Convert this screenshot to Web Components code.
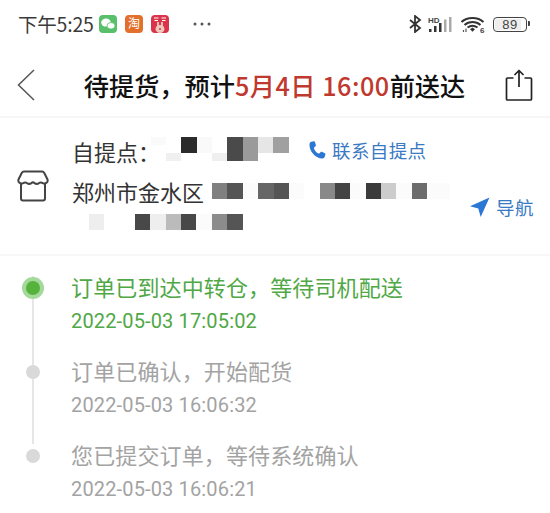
<!DOCTYPE html>
<html lang="zh">
<head>
<meta charset="utf-8">
<style>
  html, body { margin: 0; background: #fff; }
  body { width: 550px; height: 513px; overflow: hidden; font-family: "Noto Sans CJK SC", "Noto Sans", sans-serif; }
</style>
</head>
<body>
<status-bar></status-bar>
<order-header></order-header>
<pickup-card></pickup-card>
<order-timeline>
  <timeline-step active title="订单已到达中转仓，等待司机配送" time="2022-05-03 17:05:02"></timeline-step>
  <timeline-step title="订单已确认，开始配货" time="2022-05-03 16:06:32"></timeline-step>
  <timeline-step last title="您已提交订单，等待系统确认" time="2022-05-03 16:06:21"></timeline-step>
</order-timeline>

<script>
(function() {
  // 打码色块: [宽度, 颜色, 高度(可选), 顶部偏移(可选)]
  class MosaicRow extends HTMLElement {
    constructor() {
      super();
      this.attachShadow({ mode: 'open' });
    }
    connectedCallback() {
      const cells = JSON.parse(this.getAttribute('cells') || '[]');
      const h = this.getAttribute('h') || 16;
      this.shadowRoot.innerHTML = `
        <style>
          :host { display: inline-flex; height: ${h}px; vertical-align: top; }
          i { display: block; flex: none; }
        </style>
        ${cells.map(c => `<i style="width:${c[0]}px;height:${c[2] || h}px;margin-top:${c[3] || 0}px;background:${c[1]}"></i>`).join('')}
      `;
    }
  }

  class StatusBar extends HTMLElement {
    constructor() {
      super();
      this.attachShadow({ mode: 'open' });
      this.shadowRoot.innerHTML = `
        <style>
          :host { display: flex; align-items: center; height: 48px; box-sizing: border-box; padding: 0 0 0 18px; color: #3a3a3a; }
          .time { font: 400 19.500px/24px "Noto Sans CJK SC", sans-serif; width: 81px; white-space: nowrap; letter-spacing: -.2px; }
          .apps { display: flex; gap: 8px; align-items: center; }
          .apps svg { display: block; }
          .more { margin-left: 16px; }
          .right { margin-left: auto; margin-right: 23px; display: flex; align-items: center; }
          .batt { position: relative; width: 34px; height: 15px; box-sizing: border-box; border: 1.200px solid #444; border-radius: 4px; margin-left: 8px;
                  background: linear-gradient(90deg, #eee 85%, #fff 85%); background-clip: content-box; padding: 1px;
                  font: 400 13px/11px "Liberation Sans", sans-serif; text-align: center; color: #444; letter-spacing: .6px; }
          .batt::after { content: ""; position: absolute; right: -4px; top: 3.500px; width: 2px; height: 5px; background: #444; border-radius: 0 1px 1px 0; }
        </style>
        <span class="time">下午5:25</span>
        <div class="apps">
          <svg width="18" height="18" viewBox="0 0 18 18">
            <rect width="18" height="18" rx="4" fill="#58bf6b"/>
            <ellipse cx="7" cy="7.600" rx="4.800" ry="4" fill="#fff"/>
            <ellipse cx="12" cy="10.800" rx="4" ry="3.300" fill="#fff" stroke="#58bf6b" stroke-width=".8"/>
          </svg>
          <svg width="18" height="18" viewBox="0 0 18 18">
            <rect width="18" height="18" rx="4" fill="#e2702a"/>
            <text x="9" y="13" text-anchor="middle" font-family="Noto Sans CJK SC" font-size="12" fill="#fff">淘</text>
          </svg>
          <svg width="18" height="18" viewBox="0 0 18 18">
            <rect width="18" height="18" rx="4" fill="#d8344a"/>
            <path d="M3 3h4.500M3.500 5.500h3.500M10.500 3h4.500M11 5.500h3.500" stroke="#fff" stroke-width="1.100"/>
            <ellipse cx="9" cy="14" rx="4.500" ry="4" fill="#f0c8c0"/>
            <path d="M7 11V7M11 11V7" stroke="#f0c8c0" stroke-width="1.800"/>
            <circle cx="9" cy="14" r="1" fill="#c8404a"/>
          </svg>
          <svg class="more" width="18" height="4" viewBox="0 0 18 4" fill="#555">
            <circle cx="2" cy="2" r="1.500"/><circle cx="9" cy="2" r="1.500"/><circle cx="16" cy="2" r="1.500"/>
          </svg>
        </div>
        <div class="right">
          <svg width="13" height="18" viewBox="0 0 13 18" fill="none" stroke="#333" stroke-width="1.800">
            <path d="M1 5l10 8-5 4V1l5 4-10 8"/>
          </svg>
          <svg style="margin-left:6px" width="26" height="17" viewBox="0 0 26 17">
            <text x="0" y="7" font-family="Liberation Sans" font-size="8" font-weight="700" fill="#444">HD</text>
            <rect x="1" y="13" width="2.500" height="3" fill="#333"/>
            <rect x="6" y="10" width="2.500" height="6" fill="#333"/>
            <rect x="11" y="7" width="2.500" height="9" fill="#333"/>
            <rect x="16" y="3.500" width="2.500" height="12.500" fill="#aaa"/>
            <rect x="21" y="1" width="2.500" height="15" fill="#aaa"/>
          </svg>
          <svg style="margin-left:7px" width="24" height="18" viewBox="0 0 24 18">
            <path d="M.5 7C6 1.500 17 1.500 22.500 7M3.500 10C8 6 15 6 19.500 10M6.500 12.500C9.500 10.300 13.500 10.300 16.500 12.500" fill="none" stroke="#333" stroke-width="2"/>
            <path d="M9 14.300L11.500 12.500l2.500 1.800-2.500 2.500z" fill="#333"/>
            <path d="M2.500 17v-2M5 17v-3.500" stroke="#555" stroke-width="1.200"/>
            <text x="19" y="17.500" font-family="Liberation Sans" font-size="8" font-weight="700" fill="#444">6</text>
          </svg>
          <div class="batt">89</div>
        </div>
      `;
    }
  }

  class OrderHeader extends HTMLElement {
    constructor() {
      super();
      this.attachShadow({ mode: 'open' });
      this.shadowRoot.innerHTML = `
        <style>
          :host { display: flex; align-items: center; height: 70px; box-sizing: border-box; padding: 6px 17px 0 17px; border-bottom: 2px solid #f6f6f6; color: #111; }
          svg { display: block; flex: none; }
          h1 { flex: 1; margin: 0; text-align: center; font: 500 25.200px/30px "Noto Sans CJK SC", sans-serif; white-space: nowrap; padding-left: 9px; }
          em { font-style: normal; color: #c0392e; letter-spacing: .5px; }
        </style>
        <svg width="18" height="32" viewBox="0 0 18 32" fill="none" stroke="#555" stroke-width="1.500">
          <path d="M17 1L1.500 16 17 31"/>
        </svg>
        <h1>待提货，预计<em>5月4日 16:00</em>前送达</h1>
        <svg width="28" height="32" viewBox="0 0 28 32" fill="none" stroke="#222" stroke-width="1.700" stroke-linejoin="round">
          <path d="M8.500 9H2.500a1 1 0 0 0-1 1v20a1 1 0 0 0 1 1h23a1 1 0 0 0 1-1V10a1 1 0 0 0-1-1h-6"/>
          <path d="M14 1.500V18M9.500 6L14 1.500 18.500 6"/>
        </svg>
      `;
    }
  }

  class PickupCard extends HTMLElement {
    constructor() {
      super();
      this.attachShadow({ mode: 'open' });
      const c1 = [[15,'#fafafa',8,0],[15,'#f0f0f0',8,16],[16,'#2b2b2b',16],[15,'#f9f9f9',16],[15,'#efefef',8,16],[16,'#4a4a4a',24],[15,'#9a9a9a',24],[15,'#e6e6e6',16],[16,'#a0a0a0',16]];
      const c2 = [[15,'#808080'],[16,'#555'],[15,'#fbfbfb'],[16,'#666'],[15,'#555'],[15,'#fbfbfb'],[16,'#fff'],[15,'#888'],[15,'#444'],[16,'#fbfbfb'],[15,'#3a3a3a'],[15,'#ccc'],[16,'#fbfbfb'],[15,'#6c6c6c'],[23,'#fbfbfb']];
      const c3 = [[15,'#eee'],[31,'#fff'],[15,'#484848'],[16,'#eee'],[15,'#bbb'],[15,'#484848'],[16,'#fbfbfb'],[15,'#8c8c8c'],[16,'#555']];
      this.shadowRoot.innerHTML = `
        <style>
          :host { display: flex; height: 138px; box-sizing: border-box; padding: 0 17px 0 17px; border-bottom: 2px solid #f7f7f7; color: #333; position: relative; }
          .ico { flex: none; align-self: center; margin-right: 23px; display: block; }
          .body { flex: 1; padding-top: 19px; }
          .line { display: flex; align-items: center; white-space: nowrap; font: 400 22px/24px "Noto Sans CJK SC", sans-serif; height: 24px; }
          .line.s2 { margin-top: 18px; }
          .line.s3 { margin-top: 11px; height: 16px; padding-left: 17px; }
          .label { width: 79px; flex: none; margin-top: 3px; }
          .addr { width: 140px; flex: none; margin-top: -1px; }
          a { color: #3a79c4; font-size: 18.500px; display: flex; align-items: center; letter-spacing: .4px; }
          a svg { display: block; flex: none; }
          .contact { margin-left: 19px; margin-top: 2px; }
          .contact svg { margin-right: 6px; }
          .nav { position: absolute; left: 470px; top: 78px; line-height: 22px; }
          .nav svg { margin-right: 6px; }
        </style>
        <svg class="ico" width="32" height="32" viewBox="0 0 32 32" fill="none" stroke="#444" stroke-width="2">
          <path d="M7 1.500h18c1 0 1.800.6 2.300 1.500l3 6c.6 1.300.4 2.600-.5 3.500-1.200 1.100-2.800 1.300-4 .6-1.300-.8-2.700-.9-3.800 0-1.400 1-3.200 1-4.600-.2-.9-.7-1.900-.7-2.800 0-1.400 1.200-3.200 1.200-4.600.2-1.100-.9-2.500-.8-3.800 0-1.200.7-2.800.5-4-.6-.9-.9-1.100-2.200-.5-3.500l3-6C5.200 2.100 6 1.500 7 1.500z"/>
          <path d="M4 14v14.500a2 2 0 0 0 2 2h20a2 2 0 0 0 2-2V14"/>
        </svg>
        <div class="body">
          <div class="line"><span class="label">自提点：</span><mosaic-row h="24" cells='${JSON.stringify(c1)}'></mosaic-row>
            <a class="contact"><svg width="18" height="19" viewBox="0 0 18 19" fill="#2b78d4"><path d="M3.500.8l2.300-.5c.5-.1.900.1 1.100.6l1 3c.1.400 0 .8-.3 1.100L6.200 6.500c-.3.300-.3.600-.2 1 .9 2.400 2.300 4 4.500 5 .4.200.7.100 1-.2l1.300-1.300c.3-.3.700-.4 1.100-.2l3 1.400c.4.200.6.600.5 1.100l-.6 2.300c-.2 1-1 1.800-2.100 1.900C8.500 18 1 10.500 1.500 3.200 1.600 2 2.400 1.100 3.500.8z"/></svg>联系自提点</a>
          </div>
          <div class="line s2"><span class="addr">郑州市金水区</span><mosaic-row cells='${JSON.stringify(c2)}'></mosaic-row></div>
          <div class="line s3"><mosaic-row cells='${JSON.stringify(c3)}'></mosaic-row></div>
        </div>
        <a class="nav"><svg width="20" height="20" viewBox="0 0 20 20" fill="#2b78d4"><path d="M19.500.5L0 9.300l8.300 2.300 2.400 8.400z"/></svg>导航</a>
      `;
    }
  }

  class OrderTimeline extends HTMLElement {
    constructor() {
      super();
      this.attachShadow({ mode: 'open' });
      this.shadowRoot.innerHTML = `
        <style>:host { display: block; padding-top: 10px; }</style>
        <slot></slot>
      `;
    }
  }

  class TimelineStep extends HTMLElement {
    constructor() {
      super();
      this.attachShadow({ mode: 'open' });
    }
    connectedCallback() {
      const active = this.hasAttribute('active');
      const last = this.hasAttribute('last');
      this.shadowRoot.innerHTML = `
        <style>
          :host { display: flex; height: 84px; color: ${active ? '#4fa845' : '#a3a3a3'}; }
          .rail { flex: none; width: 66px; position: relative; margin-right: 5px; }
          .rail::before { content: ""; display: ${last ? 'none' : 'block'}; position: absolute; left: 32px; top: 10px; bottom: -10px; width: 2px; background: #e6e6e6; }
          .dot { position: absolute; box-sizing: border-box; border-radius: 50%; }
          .dot.on { left: 22px; top: 11px; width: 22px; height: 22px; background: #55b33c; border: 4px solid #a3d99a; }
          .dot.off { left: 26px; top: 15px; width: 14px; height: 14px; background: #d9d9d9; }
          .t { font: 400 22px/30px "Noto Sans CJK SC", sans-serif; white-space: nowrap; padding-top: 5px; letter-spacing: .13px; }
          .d { font: 400 20px/24px Roboto, sans-serif; white-space: nowrap; padding-top: 8px; letter-spacing: .15px; }
        </style>
        <div class="rail"><span class="dot ${active ? 'on' : 'off'}"></span></div>
        <div>
          <div class="t">${this.getAttribute('title')}</div>
          <div class="d">${this.getAttribute('time')}</div>
        </div>
      `;
    }
  }

  customElements.define('mosaic-row', MosaicRow);
  customElements.define('status-bar', StatusBar);
  customElements.define('order-header', OrderHeader);
  customElements.define('pickup-card', PickupCard);
  customElements.define('order-timeline', OrderTimeline);
  customElements.define('timeline-step', TimelineStep);
})();
</script>
</body>
</html>
